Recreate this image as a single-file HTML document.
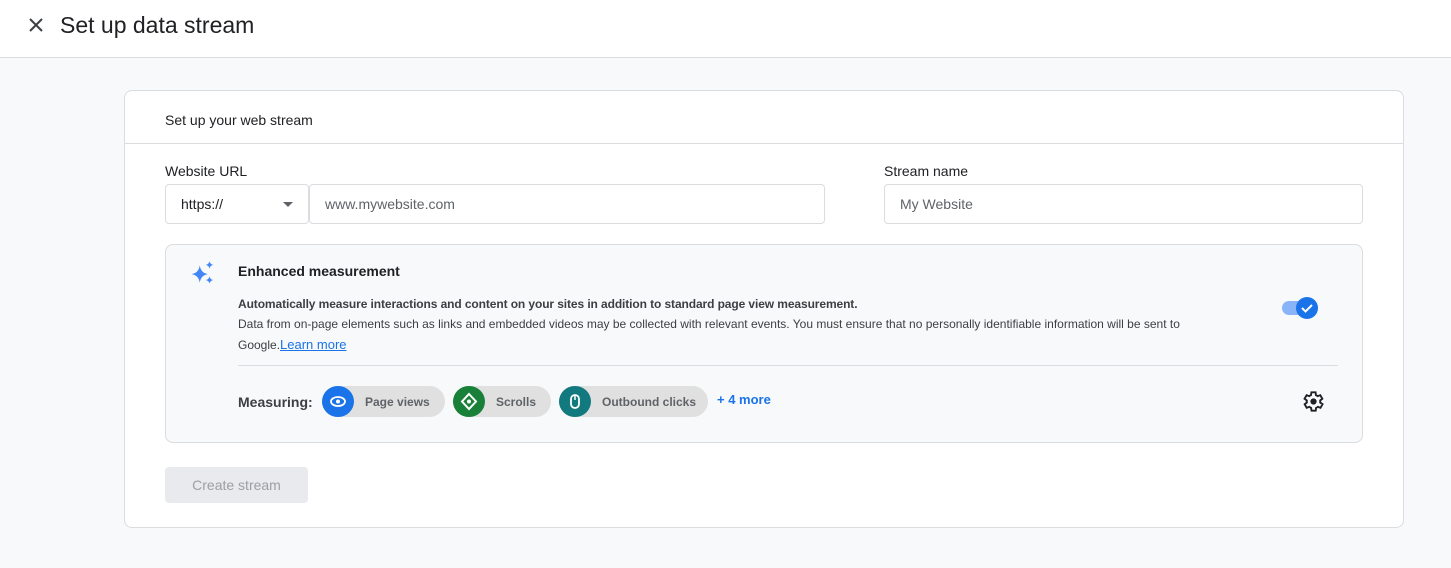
<!DOCTYPE html>
<html><head><style>
*{box-sizing:border-box;margin:0;padding:0}
body{width:1451px;height:568px;background:#f8f9fa;font-family:"Liberation Sans",Arial,sans-serif;color:#202124;position:relative;overflow:hidden}
.top{position:absolute;left:0;top:0;width:1451px;height:58px;background:#fff;border-bottom:1px solid #dadce0}
.top .t{position:absolute;left:60px;top:12px;font-size:23px;color:#202124}
.card{position:absolute;left:124px;top:90px;width:1280px;height:438px;background:#fff;border:1px solid #dadce0;border-radius:8px}
.abs{position:absolute}
.lbl{font-size:14px;color:#202124}
.box{position:absolute;border:1px solid #dadce0;border-radius:4px;background:#fff;height:40px;font-size:14px;color:#5f6368;padding:11px 15px}
.em{position:absolute;left:40px;top:153px;width:1198px;height:199px;background:#f8f9fa;border:1px solid #dadce0;border-radius:8px}
.chip{position:absolute;top:141px;height:31px;border-radius:16px;background:#e0e0e0;font-size:12px;font-weight:bold;color:#5f6368}
.chip .c{position:absolute;left:0;top:0;width:32px;height:31px;border-radius:50%}
.chip span{position:absolute;top:9px}
</style></head><body>
<div class="top">
<svg class="abs" style="left:28px;top:17px" width="16" height="16" viewBox="0 0 16 16"><path d="M2 2L14 14M14 2L2 14" stroke="#3c4043" stroke-width="2"/></svg>
<div class="t">Set up data stream</div></div>
<div class="card">
<div class="abs lbl" style="left:40px;top:21px">Set up your web stream</div>
<div class="abs" style="left:0;top:52px;width:1278px;height:1px;background:#dadce0"></div>
<div class="abs lbl" style="left:40px;top:72px">Website URL</div>
<div class="box" style="left:40px;top:93px;width:144px;color:#202124">https://<svg class="abs" style="left:117px;top:17px" width="10" height="5"><path d="M0 0L10 0L5 5Z" fill="#5f6368"/></svg></div>
<div class="box" style="left:184px;top:93px;width:516px">www.mywebsite.com</div>
<div class="abs lbl" style="left:759px;top:72px">Stream name</div>
<div class="box" style="left:759px;top:93px;width:479px">My Website</div>
<div class="em">
<svg class="abs" style="left:24px;top:14px" width="26" height="28" viewBox="0 0 24 24" fill="#4285f4"><path d="M9 5Q10 12 16.5 13Q10 14 9 21Q8 14 1.5 13Q8 12 9 5Z"/><path d="M18 1Q18.5 4 21.5 4.5Q18.5 5 18 8Q17.5 5 14.5 4.5Q17.5 4 18 1Z"/><path d="M18 15Q18.5 18 21.5 18.5Q18.5 19 18 22Q17.5 19 14.5 18.5Q17.5 18 18 15Z"/></svg>
<div class="abs" style="left:72px;top:18px;font-size:14px;font-weight:bold">Enhanced measurement</div>
<div class="abs" style="left:72px;top:52px;font-size:12px;font-weight:bold;color:#3c4043;letter-spacing:-0.1px">Automatically measure interactions and content on your sites in addition to standard page view measurement.</div>
<div class="abs" style="left:72px;top:70px;width:1010px;font-size:12px;line-height:19.5px;color:#3c4043">Data from on-page elements such as links and embedded videos may be collected with relevant events. You must ensure that no personally identifiable information will be sent to Google.<span style="color:#1a73e8;text-decoration:underline;font-size:13px">Learn more</span></div>
<div class="abs" style="left:1116px;top:56px;width:30px;height:14px;border-radius:7px;background:#8ab4f8"></div>
<div class="abs" style="left:1130px;top:52px;width:22px;height:22px;border-radius:50%;background:#1a73e8"><svg width="22" height="22"><path d="M6 11L9.5 14.5L16 8" stroke="#fff" stroke-width="2" fill="none"/></svg></div>
<div class="abs" style="left:72px;top:120px;width:1100px;height:1px;background:#dadce0"></div>
<div class="abs" style="left:72px;top:149px;font-size:14px;font-weight:bold;color:#3c4043">Measuring:</div>
<div class="chip" style="left:156px;width:123px"><div class="c" style="background:#1a73e8"><svg width="32" height="31"><ellipse cx="16" cy="15.5" rx="7" ry="4.5" fill="none" stroke="#fff" stroke-width="1.8"/><circle cx="16" cy="15.5" r="2" fill="#fff"/></svg></div><span style="left:43px">Page views</span></div>
<div class="chip" style="left:287px;width:98px"><div class="c" style="background:#188038"><svg width="32" height="31"><path d="M16 8L23 15.5L16 23L9 15.5Z" fill="none" stroke="#fff" stroke-width="2"/><circle cx="16" cy="15.5" r="2" fill="#fff"/></svg></div><span style="left:43px">Scrolls</span></div>
<div class="chip" style="left:393px;width:149px"><div class="c" style="background:#12797e"><svg width="32" height="31"><rect x="12" y="9" width="8" height="13" rx="4" fill="none" stroke="#fff" stroke-width="1.8"/><path d="M16 10V14" stroke="#fff" stroke-width="1.5"/></svg></div><span style="left:43px">Outbound clicks</span></div>
<div class="abs" style="left:551px;top:147px;font-size:13px;font-weight:bold;color:#1a73e8">+ 4 more</div>
<svg class="abs" style="left:1135px;top:144px" width="25" height="25" viewBox="0 0 24 24"><path d="M19.4 13a7.5 7.5 0 000-2l2.1-1.6-2-3.5-2.5 1a7 7 0 00-1.7-1L15 3.2h-4l-.4 2.7a7 7 0 00-1.7 1l-2.5-1-2 3.5L6.6 11a7.5 7.5 0 000 2l-2.1 1.6 2 3.5 2.5-1a7 7 0 001.7 1l.4 2.7h4l.4-2.7a7 7 0 001.7-1l2.5 1 2-3.5z" fill="none" stroke="#202124" stroke-width="1.8" transform="translate(-1 0)"/><circle cx="12" cy="12" r="3" fill="#202124"/></svg>
</div>
<div class="abs" style="left:40px;top:376px;width:143px;height:36px;background:#e8eaed;border-radius:4px;font-size:14px;color:#9aa0a6;text-align:center;padding-top:10px">Create stream</div>
</div>
</body></html>
